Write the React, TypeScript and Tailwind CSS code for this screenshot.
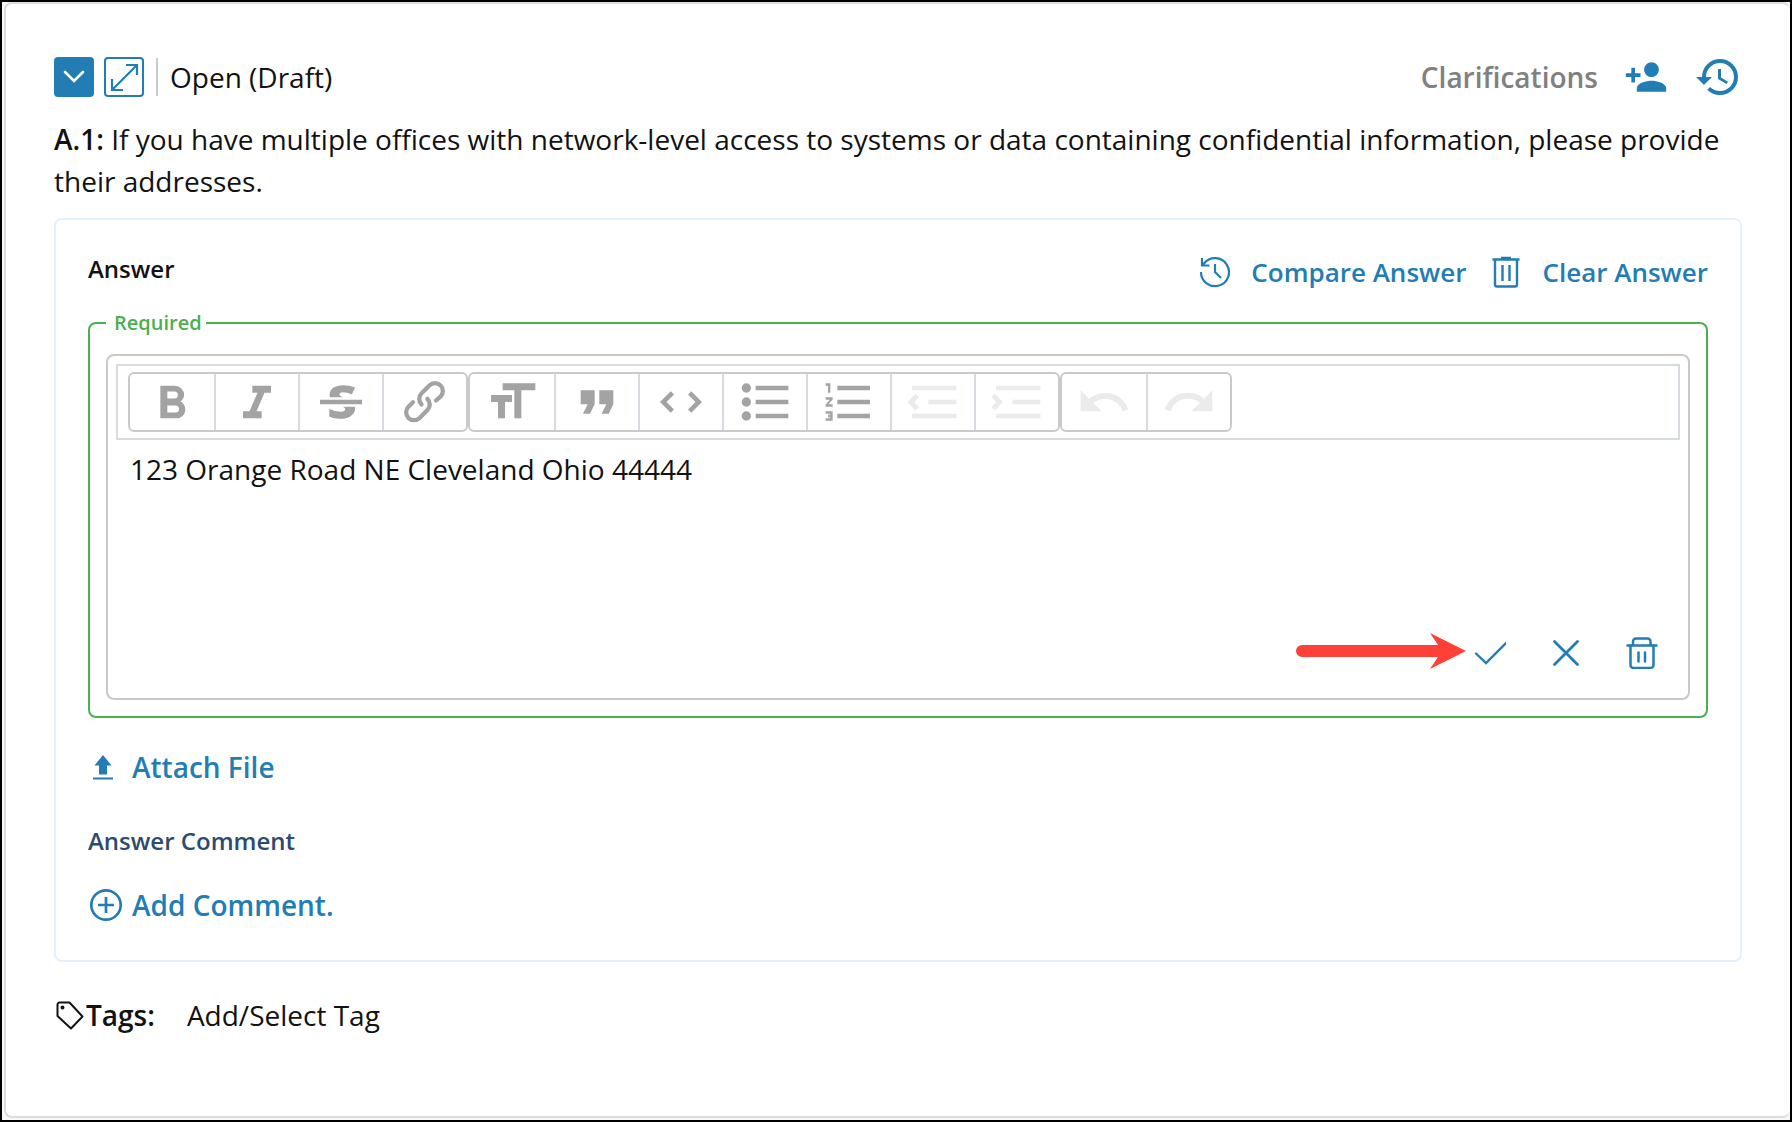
import React, { useState } from 'react';

type ToolbarButton = {
  name: string;
  path: string;
  disabled?: boolean;
};

const textTools: ToolbarButton[] = [
  {
    name: 'Bold',
    path: 'M15.6 11.8c1-.7 1.6-1.8 1.6-2.8a4 4 0 0 0-4-4H7v14h7c2.1 0 3.7-1.7 3.7-3.8 0-1.5-.8-2.8-2.1-3.4zM10 7.5h3a1.5 1.5 0 1 1 0 3h-3v-3zm3.5 9H10v-3h3.5a1.5 1.5 0 1 1 0 3z',
  },
  { name: 'Italic', path: 'M10 5v3h2.2l-3.4 8H6v3h8v-3h-2.2l3.4-8H18V5h-8z' },
  {
    name: 'Strikethrough',
    path: 'M12.73 14l.28.14c.26.15.45.3.57.44.12.14.18.3.18.5 0 .3-.15.56-.44.75-.3.2-.76.3-1.39.3A13.52 13.52 0 0 1 7 14.95v3.37a10.64 10.64 0 0 0 4.84.88c1.26 0 2.35-.19 3.28-.56.93-.37 1.64-.9 2.14-1.57s.74-1.45.74-2.32c0-.26-.02-.51-.06-.75h-5.21zm-5.5-4c-.08-.34-.12-.7-.12-1.1 0-1.29.52-2.3 1.58-3.02 1.05-.72 2.5-1.08 4.34-1.08 1.62 0 3.28.34 4.97 1l-1.3 2.93c-1.47-.6-2.73-.9-3.8-.9-.55 0-.96.08-1.2.26-.26.17-.38.38-.38.64 0 .27.16.52.48.74.17.12.53.3 1.05.53H7.23zM3 13h18v-2H3v2z',
  },
  {
    name: 'Link',
    path: 'M9.88 13.7a4.3 4.3 0 0 1 0-6.07l3.37-3.37a4.26 4.26 0 0 1 6.07 0 4.3 4.3 0 0 1 0 6.06l-1.96 1.72a.91.91 0 1 1-1.3-1.3l1.97-1.71a2.46 2.46 0 0 0-3.48-3.48l-3.38 3.37a2.46 2.46 0 0 0 0 3.48.91.91 0 1 1-1.3 1.3zM4.25 19.46a4.3 4.3 0 0 1 0-6.07l1.93-1.9a.91.91 0 1 1 1.3 1.3l-1.93 1.9a2.46 2.46 0 0 0 3.48 3.48l3.37-3.38c.96-.96.96-2.52 0-3.48a.91.91 0 1 1 1.3-1.3 4.3 4.3 0 0 1 0 6.07l-3.38 3.38a4.26 4.26 0 0 1-6.07 0z',
  },
];

const blockTools: ToolbarButton[] = [
  { name: 'Heading', path: 'M12 9v3H9v7H6v-7H3V9h9zM8 4h14v3h-6v12h-3V7H8V4z' },
  { name: 'Quote', path: 'M6 17h3l2-4V7H5v6h3zm8 0h3l2-4V7h-6v6h3z' },
  {
    name: 'Code',
    path: 'M18.2 12L15 15.2l1.4 1.4L21 12l-4.6-4.6L15 8.8l3.2 3.2zM5.8 12L9 8.8 7.6 7.4 3 12l4.6 4.6L9 15.2 5.8 12z',
  },
  {
    name: 'Bullets',
    path: 'M4 4a2 2 0 1 0 0 4 2 2 0 0 0 0-4zm0 6a2 2 0 1 0 0 4 2 2 0 0 0 0-4zm0 6a2 2 0 1 0 0 4 2 2 0 0 0 0-4zm4 3h14v-2H8v2zm0-6h14v-2H8v2zm0-8v2h14V5H8z',
  },
  {
    name: 'Numbers',
    path: 'M2 17h2v.5H3v1h1v.5H2v1h3v-4H2v1zm1-9h1V4H2v1h1v3zm-1 3h1.8L2 13.1v.9h3v-1H3.2L5 10.9V10H2v1zm5-6v2h14V5H7zm0 14h14v-2H7v2zm0-6h14v-2H7v2z',
  },
  {
    name: 'Decrease Level',
    path: 'M3 19h19v-2H3v2zm7-6h12v-2H10v2zm-8.3-.3l2.8 2.9L6 14.2 4 12l2-2-1.4-1.5L1 12l.7.7zM3 5v2h19V5H3z',
    disabled: true,
  },
  {
    name: 'Increase Level',
    path: 'M3 19h19v-2H3v2zm7-6h12v-2H10v2zm-6.9-1L1 14.2l1.4 1.4L6 12l-.7-.7-2.8-2.8L1 9.9 3.1 12zM3 5v2h19V5H3z',
    disabled: true,
  },
];

const historyTools: ToolbarButton[] = [
  {
    name: 'Undo',
    path: 'M12.5 8c-2.6 0-5 1-6.9 2.6L2 7v9h9l-3.6-3.6A8 8 0 0 1 20 16l2.4-.8a10.5 10.5 0 0 0-10-7.2z',
    disabled: true,
  },
  {
    name: 'Redo',
    path: 'M18.4 10.6a10.5 10.5 0 0 0-16.9 4.6L4 16a8 8 0 0 1 12.7-3.6L13 16h9V7l-3.6 3.6z',
    disabled: true,
  },
];

function ToolbarGroup({ buttons }: { buttons: ToolbarButton[] }) {
  return (
    <div className="flex rounded-md border-2 border-[#cacaca]">
      {buttons.map(({ name, path, disabled }) => (
        <button
          key={name}
          type="button"
          aria-label={name}
          disabled={disabled}
          className="flex h-14 w-[84px] items-center justify-center border-l-2 border-[#d5dbe1] text-[#a3a3a3] first:border-l-0 disabled:text-[#ebebeb]"
        >
          <svg viewBox="0 0 24 24" fill="currentColor" className="size-14">
            <path d={path} />
          </svg>
        </button>
      ))}
    </div>
  );
}

function QuestionHeader() {
  return (
    <div className="flex h-[50px] items-center justify-between">
      <div className="flex items-center">
        <button
          type="button"
          aria-label="Collapse"
          className="flex size-10 items-center justify-center rounded bg-[#237db5] text-white"
        >
          <svg viewBox="0 0 40 40" fill="none" stroke="currentColor" strokeWidth="2.6" className="size-10">
            <path d="M11 15l9 9 9-9" strokeLinecap="round" />
          </svg>
        </button>
        <button
          type="button"
          aria-label="Expand"
          className="ml-2.5 flex size-10 items-center justify-center rounded border-2 border-[#237db5] text-[#237db5]"
        >
          <svg viewBox="0 0 36 36" fill="none" stroke="currentColor" strokeWidth="2.2" className="size-9">
            <path d="M6 31L31 6M20 6h11v10M6 20v11h11" />
          </svg>
        </button>
        <div className="ml-3 h-[38px] w-0.5 bg-[#c9c9c9]" />
        <span className="ml-3 leading-[42px]">Open (Draft)</span>
      </div>
      <div className="flex items-center">
        <span className="font-semibold leading-[42px] text-[#808080]">Clarifications</span>
        <button type="button" aria-label="Add person" className="ml-[26px] text-[#237db5]">
          <svg viewBox="0 0 24 24" fill="currentColor" className="size-11">
            <path d="M15 12c2.21 0 4-1.79 4-4s-1.79-4-4-4-4 1.79-4 4 1.79 4 4 4zm-9-2V7H4v3H1v2h3v3h2v-3h3v-2H6zm9 4c-2.67 0-8 1.34-8 4v2h16v-2c0-2.66-5.33-4-8-4z" />
          </svg>
        </button>
        <button type="button" aria-label="History" className="ml-[26px] text-[#237db5]">
          <svg viewBox="0 0 24 24" fill="currentColor" className="size-12">
            <path d="M13 3a9 9 0 0 0-9 9H1l3.89 3.89.07.14L9 12H6c0-3.87 3.13-7 7-7s7 3.13 7 7-3.13 7-7 7c-1.93 0-3.68-.79-4.94-2.06l-1.42 1.42A8.954 8.954 0 0 0 13 21a9 9 0 0 0 0-18zm-1 5v5l4.28 2.54.72-1.21-3.5-2.08V8H12z" />
          </svg>
        </button>
      </div>
    </div>
  );
}

function AnswerEditor() {
  const [answer, setAnswer] = useState('123 Orange Road NE Cleveland Ohio 44444');

  return (
    <fieldset className="mt-[15px] rounded-lg border-2 border-[#4caf50] px-4 py-4">
      <legend className="pl-2 pr-1 text-[20px] font-semibold leading-[30px] text-[#4caf50]">
        Required
      </legend>
      <div className="rounded-lg border-2 border-[#c9c9c9] p-2">
        <div className="flex border-2 border-[#d5dbe1] px-2.5 py-1.5">
          <ToolbarGroup buttons={textTools} />
          <ToolbarGroup buttons={blockTools} />
          <ToolbarGroup buttons={historyTools} />
        </div>
        <textarea
          aria-label="Answer"
          value={answer}
          onChange={(event) => setAnswer(event.target.value)}
          className="mt-2 block h-[189px] w-full resize-none px-[14px] leading-[42px] outline-none"
        />
        <div className="mr-[22px] mb-[21px] flex justify-end">
          <div className="relative flex gap-11 text-[#237db5]">
            <svg
              viewBox="0 0 172 36"
              fill="#ff4039"
              className="pointer-events-none absolute -top-1 right-full mr-2 h-9 w-[172px]"
            >
              <path d="M8 12H144L136 0L172 18L136 36L144 24H8A6 6 0 0 1 8 12z" />
            </svg>
            <button type="button" aria-label="Save">
              <svg viewBox="0 0 32 32" fill="none" stroke="currentColor" strokeWidth="2.4" strokeLinecap="round" className="size-8">
                <path d="M2 16.500L12 26L32 6" />
              </svg>
            </button>
            <button type="button" aria-label="Cancel">
              <svg viewBox="0 0 32 32" fill="none" stroke="currentColor" strokeWidth="2.800" strokeLinecap="round" className="size-8">
                <path d="M4.500 4.500L27.500 27.500M27.500 4.500L4.500 27.500" />
              </svg>
            </button>
            <button type="button" aria-label="Delete">
              <svg viewBox="0 0 32 32" fill="none" stroke="currentColor" strokeWidth="2.500" strokeLinecap="round" className="size-8">
                <path d="M1.500 8.500H30.500M7 8.500V4.500A3 3 0 0 1 10 1.500H21.500A3 3 0 0 1 24.500 4.500V8.500" />
                <path d="M4.500 8.500V28A3 3 0 0 0 7.500 31H24.500A3 3 0 0 0 27.500 28V8.500M12.500 15.500V24.500M19 15.500V24.500" />
              </svg>
            </button>
          </div>
        </div>
      </div>
    </fieldset>
  );
}

export default function App() {
  return (
    <div className="flex min-h-screen flex-col border-2 border-black bg-[#f8f8f8] pb-0.5 pl-0.5 font-['Open_Sans',sans-serif] text-[28px] text-[#121212]">
      <main className="grow rounded-lg border-2 border-r-0 border-[#dcdcdc] bg-white px-12 pt-12 pb-20">
        <QuestionHeader />
        <p className="mt-4 leading-[42px]">
          <b className="font-semibold">A.1:</b> If you have multiple offices with network-level
          access to systems or data containing confidential information, please provide their
          addresses.
        </p>

        <section className="mt-4 rounded-lg border-2 border-[#e3f1fe] px-8 pt-[31px] pb-[34px]">
          <div className="flex items-start justify-between">
            <h2 className="text-[24px] font-semibold leading-9">Answer</h2>
            <div className="flex gap-6 text-[26px] font-semibold leading-[42px] text-[#237db5]">
              <button type="button" className="flex items-center gap-5">
                <svg viewBox="0 0 32 32" fill="none" stroke="currentColor" strokeWidth="2.200" className="size-8">
                  <path d="M2 16A14 14 0 1 0 5 7.500L3 9.500M3 2V9.500H10.500M16 8V16L22 22" />
                </svg>
                Compare Answer
              </button>
              <button type="button" className="flex items-center gap-5">
                <svg viewBox="0 0 32 32" fill="none" stroke="currentColor" strokeWidth="2.400" className="size-8">
                  <path d="M2.500 3.500H29.500M11 2H21M5 4V28.500A2 2 0 0 0 7 30.500H25A2 2 0 0 0 27 28.500V4M12.500 9V25M19.500 9V25" />
                </svg>
                Clear Answer
              </button>
            </div>
          </div>

          <AnswerEditor />

          <button type="button" className="mt-7 flex items-center font-semibold leading-[42px] text-[#237db5]">
            <svg viewBox="0 0 32 32" fill="currentColor" className="mr-3 size-8">
              <path d="M15 4L23.500 14.500H19V23.500H11V14.500H6.500zM5 26.500H25V28.500H5z" />
            </svg>
            Attach File
          </button>

          <h3 className="mt-[35px] text-[24px] font-semibold leading-9 text-[#2c4b6e]">Answer Comment</h3>
          <button type="button" className="mt-[25px] flex items-center font-semibold leading-[42px] text-[#237db5]">
            <svg viewBox="0 0 36 36" fill="none" stroke="currentColor" strokeWidth="2.700" className="mr-2 size-9">
              <path d="M18 10V26M10 18H26" />
              <circle cx="18" cy="18" r="14.700" />
            </svg>
            Add Comment.
          </button>
        </section>

        <div className="mt-8 flex items-center leading-[42px]">
          <svg viewBox="0 0 32 32" fill="none" stroke="currentColor" strokeWidth="2" strokeLinejoin="round" className="size-8">
            <path d="M3.500 5.500A2 2 0 0 1 5.500 3.500H15.500L28.500 17.500L17 29.500L3.500 17z" />
            <circle cx="8.500" cy="8.500" r="1" fill="currentColor" />
          </svg>
          <span className="font-semibold">Tags:</span>
          <button type="button" className="ml-8">
            Add/Select Tag
          </button>
        </div>
      </main>
    </div>
  );
}
